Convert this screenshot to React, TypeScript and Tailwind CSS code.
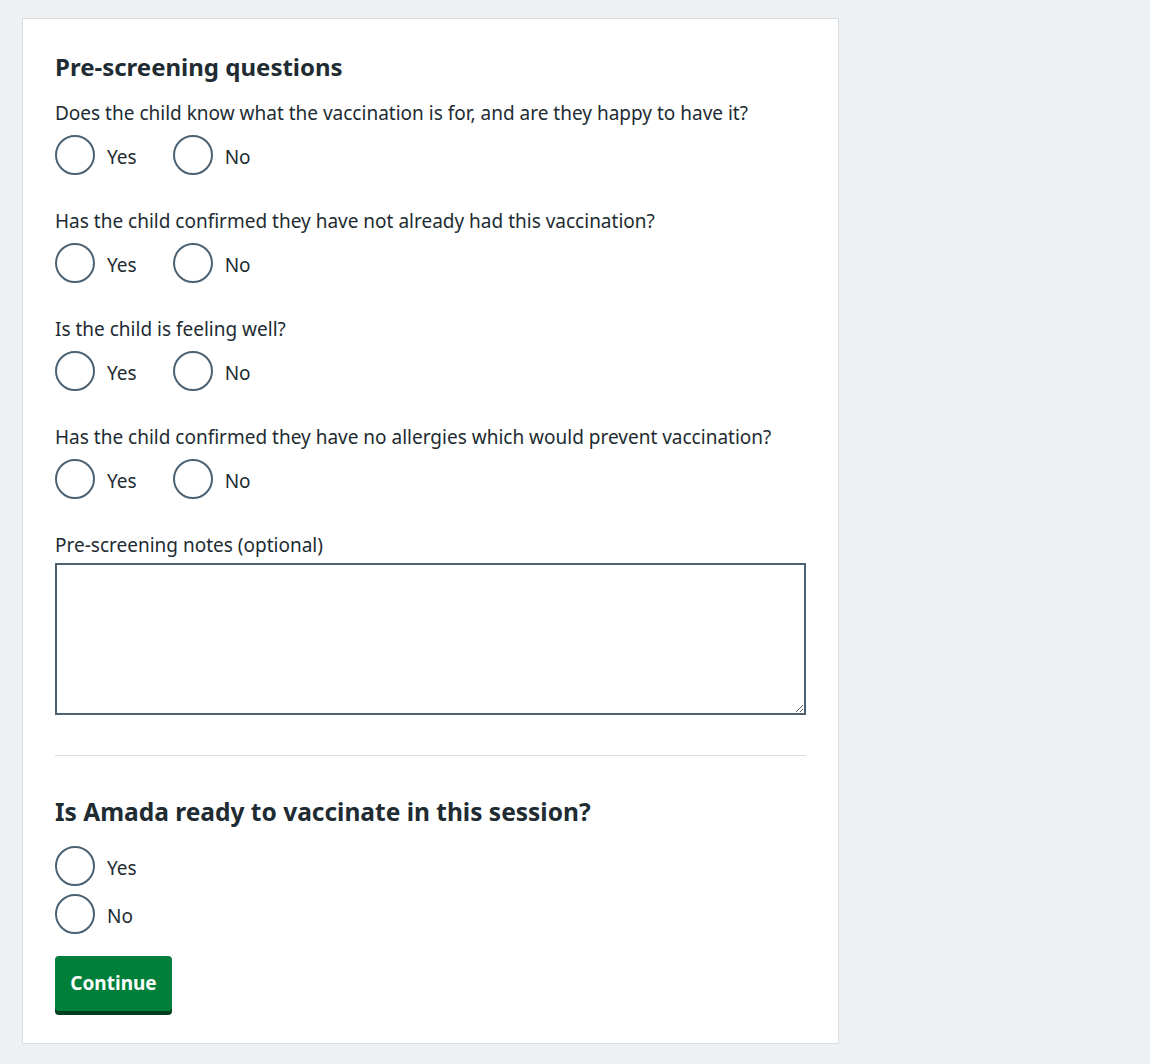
const questions = [
  "Does the child know what the vaccination is for, and are they happy to have it?",
  "Has the child confirmed they have not already had this vaccination?",
  "Is the child is feeling well?",
  "Has the child confirmed they have no allergies which would prevent vaccination?",
];

const Radio = ({ label, inline }: { label: string; inline?: boolean }) => (
  <label className={`flex items-center ${inline ? "mr-6" : ""}`}>
    <span className="h-10 w-10 shrink-0 rounded-full border-2 border-[#4c6272] bg-white" />
    <span className="px-3 pt-1 text-[19px] leading-7 text-[#212b32]">{label}</span>
  </label>
);

export default function App() {
  return (
    <div
      className="min-h-[1064px] bg-[#edf1f4] pl-[22px] pt-[18px] pb-5"
      style={{ fontFamily: "'Noto Sans', Arial, sans-serif" }}
    >
      <div className="w-[817px] border border-[#d8dde0] bg-white px-8 pt-8 pb-8 text-[#212b32]">
        <h2 className="text-[24px] leading-8 font-bold">Pre-screening questions</h2>
        {questions.map((q) => (
          <fieldset key={q} className="mt-4 mb-8">
            <legend className="mb-2 text-[19px] leading-7">{q}</legend>
            <div className="flex">
              <Radio label="Yes" inline />
              <Radio label="No" inline />
            </div>
          </fieldset>
        ))}
        <label className="mb-1 block text-[19px] leading-7">Pre-screening notes (optional)</label>
        <textarea className="block h-[152px] w-full border-2 border-[#4c6272] p-1" />
        <hr className="my-10 border-t border-[#d8dde0]" />
        <h2 className="text-[24.5px] leading-8 font-bold">Is Amada ready to vaccinate in this session?</h2>
        <div className="mt-[18px] flex flex-col gap-2">
          <Radio label="Yes" />
          <Radio label="No" />
        </div>
        <button className="mt-[22px] h-[55px] w-[117px] rounded bg-[#007f3b] text-[19px] font-bold text-white shadow-[0_4px_0_#00401e]">
          Continue
        </button>
      </div>
    </div>
  );
}
